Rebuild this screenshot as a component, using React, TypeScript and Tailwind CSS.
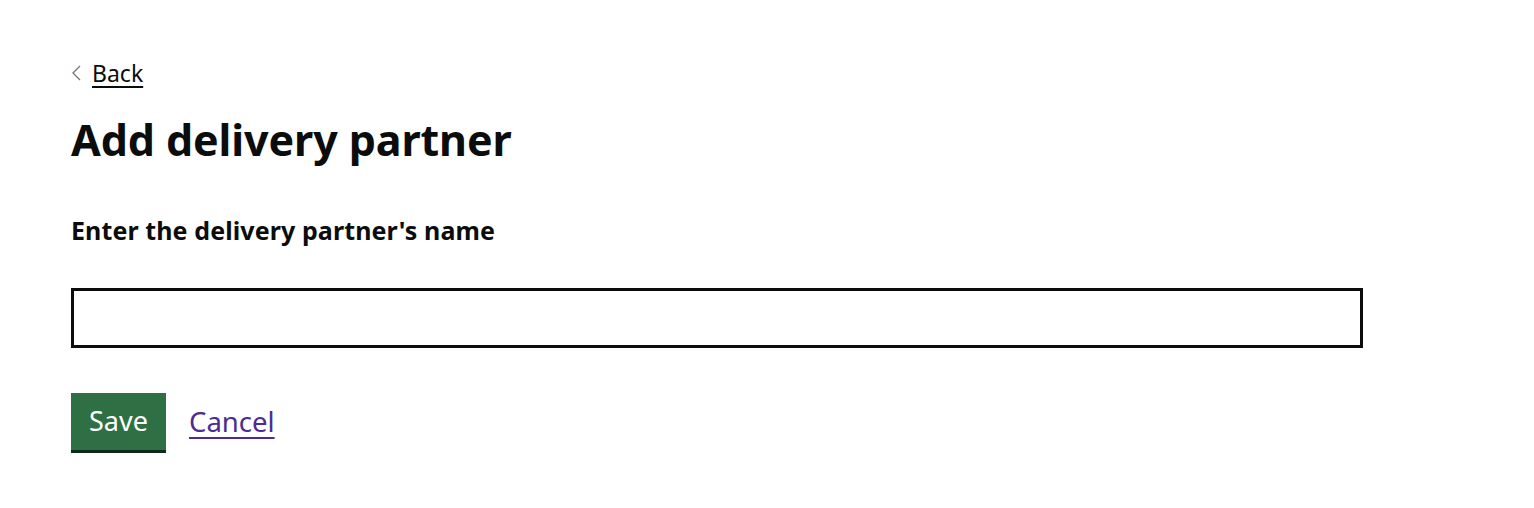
import React from "react";

export default function App() {
  return (
    <div className="min-h-[508px] w-full bg-white text-[#0b0c0c]" style={{ fontFamily: '"Noto Sans", Arial, sans-serif' }}>
      <div className="pl-[71px] pt-[58px]">
        <a href="#" className="flex items-center gap-[11px] w-fit text-[#0b0c0c]">
          <svg width="10" height="16" viewBox="0 0 10 16" className="mt-[-1px]">
            <polyline points="9,1 2,8 9,15" fill="none" stroke="#6f777b" strokeWidth="1.3" />
          </svg>
          <span className="text-[23px] leading-[30px] underline underline-offset-[4px] decoration-[2px]">Back</span>
        </a>
        <h1 className="mt-[27px] text-[43px] leading-[50px] font-bold tracking-[-0.1px]">
          Add delivery partner
        </h1>
        <label className="block mt-[49px] text-[25px] leading-[32px] font-bold tracking-[0.1px]">
          Enter the delivery partner's name
        </label>
        <input type="text" className="block mt-[42px] w-[1292px] h-[60px] border-[3px] border-[#0b0c0c] outline-none px-2 text-[22px]" />
        <div className="mt-[45px] flex items-center gap-[23px]">
          <button className="w-[95px] h-[57px] bg-[#2f6f44] text-white text-[27px] shadow-[0_3px_0_#0e2a18]">Save</button>
          <a href="#" className="text-[27.5px] text-[#4c2c92] underline underline-offset-[5px] decoration-[2px] mt-[0px]">Cancel</a>
        </div>
      </div>
    </div>
  );
}
